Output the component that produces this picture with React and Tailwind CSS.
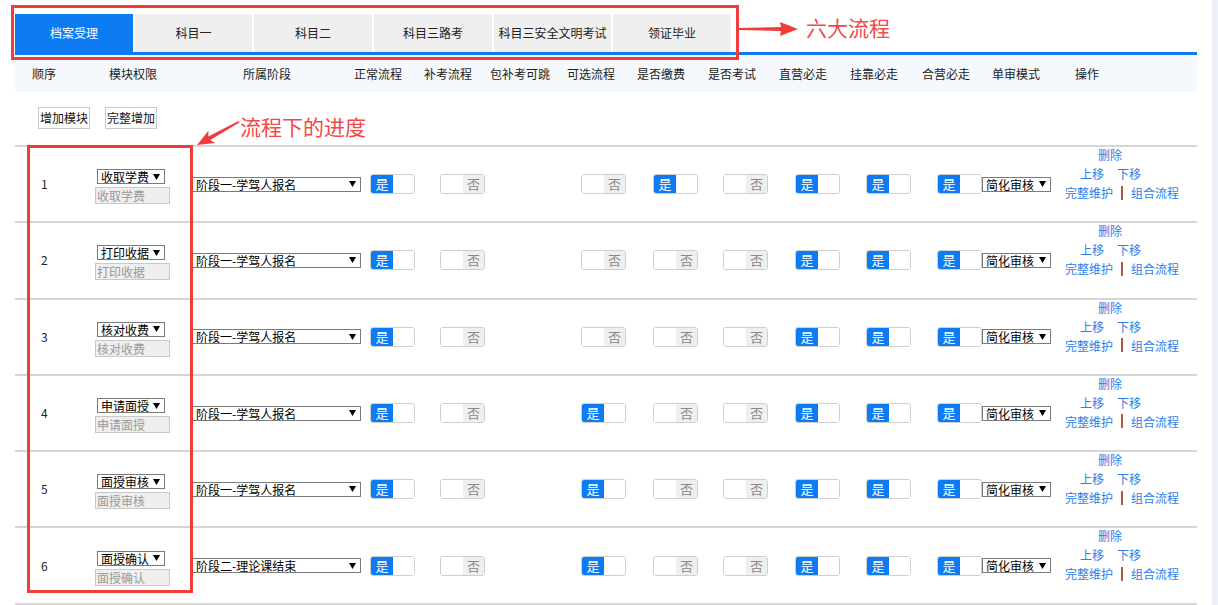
const tabs = [
  { label: "档案受理", w: "w-[118px]", active: true },
  { label: "科目一", w: "w-[117px]" },
  { label: "科目二", w: "w-[118px]" },
  { label: "科目三路考", w: "w-[118px]" },
  { label: "科目三安全文明考试", w: "w-[117px]" },
  { label: "领证毕业", w: "w-[118px]" },
];

const heads = [
  { label: "顺序", w: "w-[77px]" },
  { label: "模块权限", w: "w-[134px]" },
  { label: "所属阶段", w: "w-[111px]" },
  { label: "正常流程", w: "w-[70px]" },
  { label: "补考流程", w: "w-[66px]" },
  { label: "包补考可跳", w: "w-[77px]" },
  { label: "可选流程", w: "w-[70px]" },
  { label: "是否缴费", w: "w-[71px]" },
  { label: "是否考试", w: "w-[71px]" },
  { label: "直营必走", w: "w-[71px]" },
  { label: "挂靠必走", w: "w-[72px]" },
  { label: "合营必走", w: "w-[70px]" },
  { label: "单审模式", w: "w-[83px]" },
  { label: "操作", w: "w-[40px]" },
];

// toggle cells: 正常, 补考(+空的包补考), 可选, 缴费, 考试, 直营, 挂靠, 合营
const cellW = [
  "w-[70px]",
  "w-[141px]",
  "w-[72px]",
  "w-[70px]",
  "w-[72px]",
  "w-[71px]",
  "w-[71px]",
  "w-[45px]",
];

const rows = [
  { n: 1, name: "收取学费", stage: "阶段一-学驾人报名", t: [1, 0, 0, 1, 0, 1, 1, 1] },
  { n: 2, name: "打印收据", stage: "阶段一-学驾人报名", t: [1, 0, 0, 0, 0, 1, 1, 1] },
  { n: 3, name: "核对收费", stage: "阶段一-学驾人报名", t: [1, 0, 0, 0, 0, 1, 1, 1] },
  { n: 4, name: "申请面授", stage: "阶段一-学驾人报名", t: [1, 0, 1, 0, 0, 1, 1, 1] },
  { n: 5, name: "面授审核", stage: "阶段一-学驾人报名", t: [1, 0, 1, 0, 0, 1, 1, 1] },
  { n: 6, name: "面授确认", stage: "阶段二-理论课结束", t: [1, 0, 1, 0, 0, 1, 1, 1] },
];

function Caret() {
  return (
    <svg width="7" height="6" viewBox="0 0 7 6">
      <path d="M0 0h7L3.5 6z" fill="#000" />
    </svg>
  );
}

function FakeSelect({ text, w }) {
  return (
    <div
      className={`flex h-[15px] items-center justify-between border border-[#7a7a7a] bg-white pl-[3px] pr-[4px] text-[12px] leading-[13px] text-black ${w}`}
    >
      <span>{text}</span>
      <Caret />
    </div>
  );
}

function Toggle({ on }) {
  return (
    <div className="flex h-[20px] w-[45px] overflow-hidden rounded-[3px] border border-[#cfcfcf] text-[13px] leading-[18px]">
      {on ? (
        <>
          <span className="w-[22px] bg-[#0d7cf2] text-center text-white">是</span>
          <span className="flex-1 bg-white" />
        </>
      ) : (
        <>
          <span className="w-[22px] bg-white" />
          <span className="flex-1 bg-[#efefef] text-center text-[#888]">否</span>
        </>
      )}
    </div>
  );
}

export default function App() {
  return (
    <div className="relative h-[605px] w-[1218px] overflow-hidden bg-white font-['Noto_Sans_CJK_SC','Microsoft_YaHei',sans-serif] text-[#222]">
      <div className="ml-[15px] w-[1182px] pt-[14px]">
        {/* tabs */}
        <div className="flex h-[38px] gap-[2px]">
          {tabs.map((t) => (
            <div
              key={t.label}
              className={`flex items-center justify-center text-[12px] ${t.w} ${
                t.active ? "bg-[#0d7cf2] text-white" : "bg-[#efefef] text-[#222]"
              }`}
            >
              {t.label}
            </div>
          ))}
        </div>
        <div className="h-[3px] bg-[#0d7cf2]" />

        {/* header */}
        <div className="flex h-[37px] items-center bg-[#f5f9fd] pl-[17px] text-[12px] text-[#222]">
          {heads.map((h) => (
            <div key={h.label} className={`shrink-0 ${h.w}`}>
              {h.label}
            </div>
          ))}
        </div>

        {/* buttons */}
        <div className="flex gap-[15px] pb-[16px] pl-[23px] pt-[15px]">
          <button className="h-[22px] border border-[#c9c9c9] bg-white px-[1px] text-[12px] leading-[20px] text-[#111]">
            增加模块
          </button>
          <button className="h-[22px] border border-[#c9c9c9] bg-white px-[1px] text-[12px] leading-[20px] text-[#111]">
            完整增加
          </button>
        </div>

        {/* rows */}
        <div className="border-b-2 border-[#d6d6d6]">
          {rows.map((r) => (
            <div key={r.n} className="flex h-[76.3px] items-center border-t-2 border-[#d6d6d6]">
              <div className="w-[80px] shrink-0 pl-[26px] text-[12px] text-[#222]">{r.n}</div>
              <div className="mt-[5px] flex w-[97px] shrink-0 flex-col gap-[3px]">
                <div className="ml-[2px]">
                  <FakeSelect text={r.name} w="w-[68px]" />
                </div>
                <div className="h-[17px] w-[75px] border border-[#c8c8c8] bg-[#efefef] pl-[1px] text-[12px] leading-[15px] text-[#999]">
                  {r.name}
                </div>
              </div>
              <div className="w-[178px] shrink-0">
                <FakeSelect text={r.stage} w="w-[169px]" />
              </div>
              {r.t.map((on, i) => (
                <div key={i} className={`shrink-0 ${cellW[i]}`}>
                  <Toggle on={on} />
                </div>
              ))}
              <div className="w-[83px] shrink-0">
                <FakeSelect text="简化审核" w="w-[69px]" />
              </div>
              <div className="-mt-[2px] self-start text-[12px] leading-[19px] text-[#2b7de9]">
                <div className="pl-[33px]">删除</div>
                <div className="flex gap-[13px] pl-[15px]">
                  <span>上移</span>
                  <span>下移</span>
                </div>
                <div className="flex items-center">
                  <span>完整维护</span>
                  <span className="mx-[8px] inline-block h-[14px] w-[2px] bg-[#b5543f]" />
                  <span>组合流程</span>
                </div>
              </div>
            </div>
          ))}
        </div>
      </div>

      {/* annotations */}
      <div className="absolute left-[11px] top-[5px] h-[55px] w-[728px] border-[3px] border-[#f23c3c]" />
      <svg className="absolute left-[739px] top-[21px]" width="60" height="16" viewBox="0 0 60 16">
        <polygon points="0,7 42,6 41,1 59,8 41,15 42,10 0,9" fill="#f23c3c" />
      </svg>
      <div className="absolute left-[806px] top-[15px] text-[21px] leading-[24px] text-[#f04a4a]">六大流程</div>

      <div className="absolute left-[27px] top-[145px] h-[448px] w-[166px] border-[3px] border-[#f23c3c]" />
      <svg className="absolute left-[190px] top-[112px]" width="56" height="40" viewBox="0 0 56 40">
        <g transform="translate(7 33) rotate(-29)">
          <polygon points="0,0 17,-7 14,-2 48,-0.8 48,0.8 14,2 17,7" fill="#f23c3c" />
        </g>
      </svg>
      <div className="absolute left-[240px] top-[113px] text-[21px] leading-[26px] text-[#f04a4a]">流程下的进度</div>

      {/* scrollbar track */}
      <div className="absolute right-0 top-0 h-full w-[6px] bg-[#eef0f8]" />
    </div>
  );
}
